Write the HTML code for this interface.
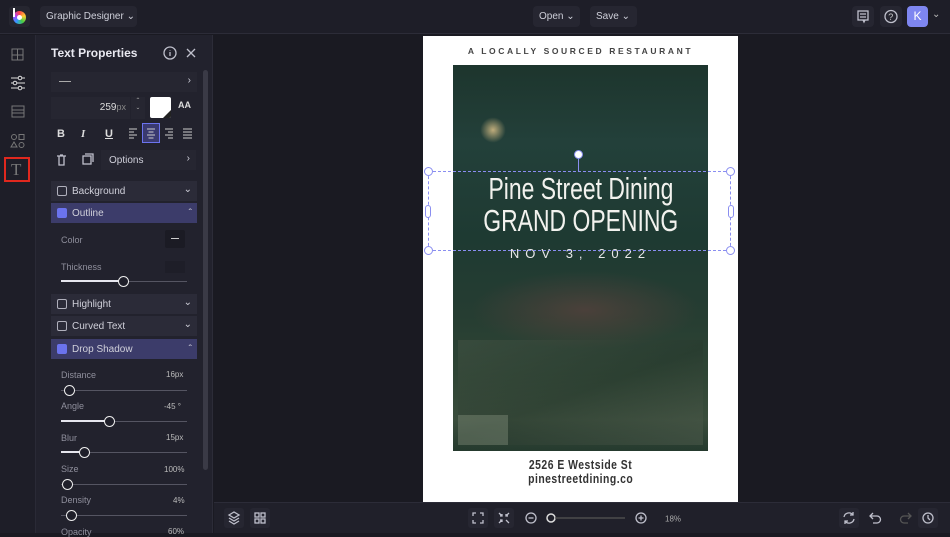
<!DOCTYPE html>
<html><head><meta charset="utf-8"><style>
*{box-sizing:border-box;margin:0;padding:0}
body{width:950px;height:533px;overflow:hidden;background:#1a1a22;font-family:"Liberation Sans",sans-serif;color:#d8d8e0;position:relative}
.a{position:absolute}
.btn{position:absolute;background:#262631;border-radius:4px;font-size:10px;color:#cfd0da;white-space:nowrap}
.ico{stroke:#bfc0cc;fill:none;stroke-width:1.3}
.row{position:absolute;left:51px;width:146px;height:20px;background:#2b2b38;font-size:10px;color:#d0d0da}
.cb{position:absolute;left:6px;top:5px;width:10px;height:10px;border:1px solid #b0b0bc;border-radius:2px}
.cbon{background:#6b73ee;border-color:#6b73ee}
.track{position:absolute;left:61px;width:126px;height:1px;background:#555562}
.fill{position:absolute;left:61px;height:2px;background:#e6e6ee}
.knob{position:absolute;width:11px;height:11px;border-radius:50%;border:1.5px solid #eee;background:#1f1f2a}
.lab{position:absolute;left:61px;font-size:9px;color:#8f8f9c}
.narrow{white-space:nowrap;display:inline-block}
</style></head><body>
<div class="a" style="left:0;top:0;width:950px;height:34px;background:#1e1e28;border-bottom:1px solid #2c2c38"></div>
<div class="a" style="left:9px;top:6px;width:21px;height:21px;border-radius:4px;background:#262630"></div>
<div class="a" style="left:13px;top:11px;width:13px;height:13px;border-radius:50%;background:conic-gradient(#f44,#fc3,#4c4,#39f,#a4f,#f44)"></div>
<div class="a" style="left:17px;top:15px;width:5px;height:5px;border-radius:50%;background:#fff"></div>
<div class="a" style="left:13px;top:8px;width:2px;height:9px;background:#fff"></div>
<div class="btn" style="left:40px;top:6px;width:97px;height:21px;padding:5px 0 0 6px">Graphic Designer &#8964;</div>
<div class="btn" style="left:533px;top:6px;width:47px;height:21px;padding:5px 0 0 6px">Open &#8964;</div>
<div class="btn" style="left:590px;top:6px;width:47px;height:21px;padding:5px 0 0 6px">Save &#8964;</div>
<div class="btn" style="left:852px;top:6px;width:22px;height:21px"><svg width="22" height="21"><rect class="ico" x="6" y="5" width="10" height="9"/><path class="ico" d="M8 8h6M8 11h6M11 14l1 2 1-2"/></svg></div>
<div class="btn" style="left:880px;top:6px;width:22px;height:21px"><svg width="22" height="21"><circle class="ico" cx="11" cy="10.5" r="6"/><text x="8.3" y="14" font-size="9" fill="#ccc" font-family="Liberation Sans">?</text></svg></div>
<div class="a" style="left:907px;top:6px;width:21px;height:21px;border-radius:4px;background:#7e86f0;color:#fff;font-size:12px;text-align:center;line-height:21px">K</div>
<div class="a" style="left:932px;top:9px;font-size:10px;color:#bbb">&#8964;</div>
<div class="a" style="left:0;top:35px;width:36px;height:498px;background:#1e1e28;border-right:1px solid #2a2a36"></div>
<svg class="a" style="left:8px;top:45px" width="20" height="130">
<rect x="4" y="4" width="11" height="11" fill="none" stroke="#777"/><path d="M4 10h11M9.5 4v11" stroke="#777" fill="none"/>
<path d="M3 33h14M3 38h14M3 43h14" stroke="#ddd" fill="none"/><circle cx="12" cy="33" r="1.8" fill="#1e1e28" stroke="#ddd"/><circle cx="7" cy="38" r="1.8" fill="#1e1e28" stroke="#ddd"/><circle cx="12" cy="43" r="1.8" fill="#1e1e28" stroke="#ddd"/>
<rect x="4" y="61" width="12" height="11" fill="none" stroke="#777"/><path d="M4 65h12M4 68h12" stroke="#777"/>
<circle cx="6" cy="92" r="2.5" fill="none" stroke="#777"/><rect x="11" y="89.5" width="5" height="5" fill="none" stroke="#777"/><circle cx="13.5" cy="100" r="2.5" fill="none" stroke="#777"/><path d="M6 97l3 5h-6z" fill="none" stroke="#777"/>
</svg>
<div class="a" style="left:4px;top:157px;width:26px;height:25px;border:2px solid #e0281e"></div>
<div class="a" style="left:11px;top:160px;font-size:17px;color:#777;font-family:'Liberation Serif',serif">T</div>
<div class="a" style="left:36px;top:35px;width:177px;height:498px;background:#22222d;border-right:1px solid #2c2c38"></div>
<div class="a" style="left:51px;top:46px;font-size:12px;font-weight:bold;color:#e8e8f0">Text Properties</div>
<svg class="a" style="left:162px;top:45px" width="40" height="16"><circle class="ico" cx="8" cy="8" r="6"/><path class="ico" d="M8 7v4M8 5v.5"/><path class="ico" d="M25 4l8 8M33 4l-8 8" stroke-width="1.5"/></svg>
<div class="a" style="left:203px;top:70px;width:5px;height:400px;background:#3a3a46;border-radius:3px"></div>
<div class="row" style="top:72px;height:20px;background:#262631"><div class="a" style="left:8px;top:9px;width:12px;height:1px;background:#aaa"></div><span class="a" style="right:6px;top:3px">&#8250;</span></div>
<div class="row" style="top:97px;width:79px;height:22px;background:#262631"><span class="a" style="right:4px;top:5px;color:#ddd">259<span style="color:#888;font-size:9px">px</span></span></div>
<div class="a" style="left:131px;top:97px;width:14px;height:22px;background:#262631;font-size:8px;color:#aaa;text-align:center;line-height:10px">&#710;<br>&#711;</div>
<div class="a" style="left:150px;top:97px;width:21px;height:21px;background:#fff;border-radius:2px;overflow:hidden"><div class="a" style="right:0;bottom:0;border-left:8px solid transparent;border-bottom:8px solid #222"></div></div>
<div class="a" style="left:178px;top:100px;font-size:9px;color:#ddd;font-weight:bold">AA</div>
<div class="a" style="left:51px;top:124px;font-size:11px;font-weight:bold;color:#ddd">
<span class="a" style="left:6px;top:4px">B</span><span class="a" style="left:30px;top:4px;font-style:italic;font-family:'Liberation Serif'">I</span><span class="a" style="left:54px;top:4px;text-decoration:underline">U</span></div>
<div class="a" style="left:142px;top:123px;width:18px;height:20px;background:#3a3a70;border:1px solid #6b73ee"></div>
<svg class="a" style="left:126px;top:126px" width="70" height="14"><g stroke="#ccc" stroke-width="1"><path d="M3 3h8M3 6h5M3 9h8M3 12h5"/><path d="M21 3h8M22.5 6h5M21 9h8M22.5 12h5"/><path d="M39 3h8M42 6h5M39 9h8M42 12h5"/><path d="M57 3h9M57 6h9M57 9h9M57 12h9"/></g></svg>
<svg class="a" style="left:54px;top:152px" width="45" height="16"><g class="ico"><path d="M3 4h9M5 4v9h5V4M6 3h3"/><rect x="29" y="4" width="8" height="8"/><path d="M31 2h8v8"/></g></svg>
<div class="row" style="top:150px;left:101px;width:95px;height:20px;background:#262631"><span class="a" style="left:8px;top:5px">Options</span><span class="a" style="right:6px;top:3px">&#8250;</span></div>
<div class="row" style="top:181px"><div class="cb"></div><span class="a" style="left:21px;top:5px">Background</span><span class="a" style="right:5px;top:3px">&#8964;</span></div>
<div class="row" style="top:203px;background:#3c3c6a"><div class="cb cbon"></div><span class="a" style="left:21px;top:5px">Outline</span><span class="a" style="right:5px;top:5px">&#710;</span></div>
<div class="lab" style="top:235px">Color</div>
<div class="a" style="left:165px;top:230px;width:20px;height:18px;background:#1b1b24;border-radius:2px"><div class="a" style="left:6px;top:8px;width:8px;height:1px;background:#ccc"></div></div>
<div class="lab" style="top:262px">Thickness</div>
<div class="a" style="left:165px;top:261px;width:20px;height:12px;background:#1e1e28"></div>
<div class="track" style="top:281px"></div><div class="fill" style="top:280px;width:62px"></div><div class="knob" style="left:118px;top:276px"></div>
<div class="row" style="top:294px"><div class="cb"></div><span class="a" style="left:21px;top:5px">Highlight</span><span class="a" style="right:5px;top:3px">&#8964;</span></div>
<div class="row" style="top:316px"><div class="cb"></div><span class="a" style="left:21px;top:5px">Curved Text</span><span class="a" style="right:5px;top:3px">&#8964;</span></div>
<div class="row" style="top:339px;background:#3c3c6a"><div class="cb cbon"></div><span class="a" style="left:21px;top:5px">Drop Shadow</span><span class="a" style="right:5px;top:5px">&#710;</span></div>
<div class="lab" style="top:370px">Distance</div><div class="a" style="left:166px;top:370px;font-size:8px;color:#bbb">16px</div>
<div class="track" style="top:390px"></div><div class="knob" style="left:64px;top:385px"></div>
<div class="lab" style="top:401px">Angle</div><div class="a" style="left:164px;top:402px;font-size:8px;color:#bbb">-45 °</div>
<div class="track" style="top:421px"></div><div class="fill" style="top:420px;width:45px"></div><div class="knob" style="left:104px;top:416px"></div>
<div class="lab" style="top:433px">Blur</div><div class="a" style="left:166px;top:433px;font-size:8px;color:#bbb">15px</div>
<div class="track" style="top:452px"></div><div class="fill" style="top:451px;width:20px"></div><div class="knob" style="left:79px;top:447px"></div>
<div class="lab" style="top:464px">Size</div><div class="a" style="left:164px;top:465px;font-size:8px;color:#bbb">100%</div>
<div class="track" style="top:484px"></div><div class="knob" style="left:62px;top:479px"></div>
<div class="lab" style="top:495px">Density</div><div class="a" style="left:173px;top:496px;font-size:8px;color:#bbb">4%</div>
<div class="track" style="top:515px"></div><div class="knob" style="left:66px;top:510px"></div>
<div class="lab" style="top:527px">Opacity</div><div class="a" style="left:168px;top:527px;font-size:8px;color:#bbb">60%</div>
<!-- poster -->
<div class="a" style="left:423px;top:36px;width:315px;height:466px;background:#fff"></div>
<div class="a" style="left:423px;top:46px;width:315px;text-align:center;font-size:8.5px;letter-spacing:2.6px;font-weight:bold;color:#444">A LOCALLY SOURCED RESTAURANT</div>
<div class="a" style="left:453px;top:65px;width:255px;height:386px;background:linear-gradient(180deg,#1d352d 0%,#23403a 20%,#1e3a32 45%,#263d32 65%,#2f4535 80%,#3a4d3c 92%,#253a2e 100%)"></div>
<div class="a" style="left:470px;top:270px;width:230px;height:80px;background:radial-gradient(ellipse,rgba(130,70,70,.4),transparent 70%)"></div>
<div class="a" style="left:458px;top:340px;width:245px;height:105px;background:linear-gradient(160deg,rgba(70,85,70,.5),rgba(35,50,40,.3) 50%,rgba(90,100,85,.4))"></div>
<div class="a" style="left:458px;top:415px;width:50px;height:30px;background:rgba(150,160,140,.35)"></div>
<div class="a" style="left:478px;top:115px;width:30px;height:30px;border-radius:50%;background:radial-gradient(circle,rgba(230,200,140,.8),transparent 60%)"></div>
<div class="a" style="left:423px;top:173px;width:315px;text-align:center;font-size:31px;line-height:32px;color:#f2f2ee"><span class="narrow" style="transform:scaleX(.74)">Pine Street Dining</span><br><span class="narrow" style="transform:scaleX(.74)">GRAND OPENING</span></div>
<div class="a" style="left:423px;top:246px;width:315px;text-align:center;font-size:13px;letter-spacing:6px;color:#e8e8e8">NOV 3, 2022</div>
<div class="a" style="left:428px;top:171px;width:303px;height:80px;border:1px dashed #8a8ef0"></div>
<div class="a" style="left:578px;top:155px;width:1px;height:16px;background:#8a8ef0"></div>
<div class="a" style="left:574px;top:150px;width:9px;height:9px;border-radius:50%;background:#fff;border:1.5px solid #8a8ef0"></div>
<div class="a" style="left:424px;top:167px;width:9px;height:9px;border-radius:50%;background:#fff;border:1px solid #8a8ef0"></div>
<div class="a" style="left:726px;top:167px;width:9px;height:9px;border-radius:50%;background:#fff;border:1px solid #8a8ef0"></div>
<div class="a" style="left:424px;top:246px;width:9px;height:9px;border-radius:50%;background:#fff;border:1px solid #8a8ef0"></div>
<div class="a" style="left:726px;top:246px;width:9px;height:9px;border-radius:50%;background:#fff;border:1px solid #8a8ef0"></div>
<div class="a" style="left:425px;top:205px;width:6px;height:13px;border-radius:3px;background:#fff;border:1px solid #8a8ef0"></div>
<div class="a" style="left:728px;top:205px;width:6px;height:13px;border-radius:3px;background:#fff;border:1px solid #8a8ef0"></div>
<div class="a" style="left:423px;top:458px;width:315px;text-align:center;font-size:13px;line-height:14px;letter-spacing:.6px;color:#333;font-weight:bold"><span class="narrow" style="transform:scaleX(.8)">2526 E Westside St</span><br><span class="narrow" style="transform:scaleX(.8)">pinestreetdining.co</span></div>
<!-- bottom bar -->
<div class="a" style="left:214px;top:502px;width:736px;height:31px;background:#20202a;border-top:1px solid #2c2c38"></div>
<svg class="a" style="left:222px;top:507px" width="720" height="22"><g class="ico">
<rect x="2" y="1" width="20" height="20" rx="3" fill="#262631" stroke="none"/><path d="M7 8l5-3 5 3-5 3zM7 11l5 3 5-3M7 14l5 3 5-3"/>
<rect x="28" y="1" width="20" height="20" rx="3" fill="#262631" stroke="none"/><rect x="33" y="6" width="4" height="4"/><rect x="39" y="6" width="4" height="4"/><rect x="33" y="12" width="4" height="4"/><rect x="39" y="12" width="4" height="4"/>
<rect x="246" y="1" width="20" height="20" rx="3" fill="#262631" stroke="none"/><path d="M251 9V6h3M258 6h3v3M261 13v3h-3M254 16h-3v-3"/>
<rect x="272" y="1" width="20" height="20" rx="3" fill="#262631" stroke="none"/><path d="M277 6l3 3M280 7v2h-2M287 6l-3 3M284 7v2h2M277 16l3-3M280 15v-2h-2M287 16l-3-3"/>
<circle cx="309" cy="11" r="5"/><path d="M306.5 11h5"/><circle cx="329" cy="11" r="4" stroke="#ddd" stroke-width="1.5"/><path d="M333 11h70" stroke="#555"/><circle cx="419" cy="11" r="5"/><path d="M416.5 11h5M419 8.5v5"/>
<rect x="617" y="1" width="20" height="20" rx="3" fill="#262631" stroke="none"/><path d="M622 10a5 5 0 0 1 9-2M632 12a5 5 0 0 1-9 2M631 5v3h-3M623 17v-3h3"/>
<path d="M648 9h7a3.5 3.5 0 0 1 0 7h-4M651 6l-3 3 3 3"/>
<path d="M689 9h-7a3.5 3.5 0 0 0 0 7h4M686 6l3 3-3 3" stroke="#555"/>
<rect x="696" y="1" width="20" height="20" rx="3" fill="#262631" stroke="none"/><circle cx="706" cy="11" r="5"/><path d="M706 8v3l2 2"/>
</g><text x="443" y="14.5" font-size="8" fill="#aaa" font-family="Liberation Sans">18%</text></svg>
</body></html>
